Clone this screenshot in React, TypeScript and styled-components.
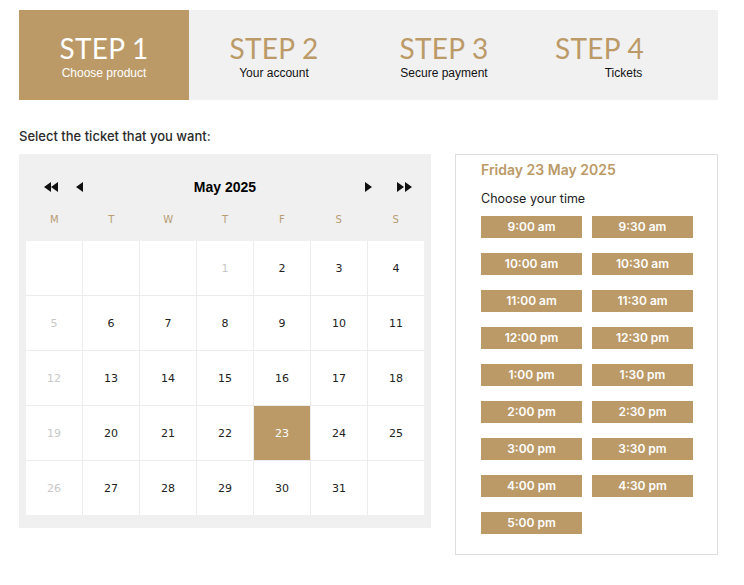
import React from 'react'
import styled, { createGlobalStyle } from 'styled-components'

const gold = '#bb9a67'

const GlobalStyle = createGlobalStyle`
  body {
    margin: 0;
    background: #fff;
    font-family: "Liberation Sans", Arial, sans-serif;
  }
`

const steps = [
    { title: 'STEP 1', label: 'Choose product', shift: 0 },
    { title: 'STEP 2', label: 'Your account', shift: 0 },
    { title: 'STEP 3', label: 'Secure payment', shift: 0 },
    { title: 'STEP 4', label: 'Tickets', shift: 48 },
]

const weekDays = ['M', 'T', 'W', 'T', 'F', 'S', 'S']

const times = [
    '9:00 am', '9:30 am', '10:00 am', '10:30 am', '11:00 am', '11:30 am',
    '12:00 pm', '12:30 pm', '1:00 pm', '1:30 pm', '2:00 pm', '2:30 pm',
    '3:00 pm', '3:30 pm', '4:00 pm', '4:30 pm', '5:00 pm',
]

// May 2025 starts on a Thursday
const days: (number | null)[] = [null, null, null, ...Array.from({ length: 31 }, (_, i) => i + 1), null]

export default function App() {
    return (
        <Page>
            <GlobalStyle />
            <Steps>
                {steps.map((s, i) => (
                    <Step key={s.title} $active={i === 0} $wide={i === 3}>
                        <StepTitle $active={i === 0} $shift={s.shift}>{s.title}</StepTitle>
                        <StepLabel $active={i === 0}>{s.label}</StepLabel>
                    </Step>
                ))}
            </Steps>

            <Intro>Select the ticket that you want:</Intro>

            <Content>
                <Calendar>
                    <NavRow>
                        <NavGroup>
                            <Arrow $dir="left" />
                            <Arrow $dir="left" />
                            <Spacer $size={18} />
                            <Arrow $dir="left" />
                        </NavGroup>
                        <Month>May 2025</Month>
                        <NavGroup $end>
                            <Arrow $dir="right" />
                            <Spacer $size={24} />
                            <Arrow $dir="right" />
                            <Arrow $dir="right" />
                        </NavGroup>
                    </NavRow>
                    <WeekRow>
                        {weekDays.map((d, i) => <WeekDay key={i}>{d}</WeekDay>)}
                    </WeekRow>
                    <DayGrid>
                        {days.map((d, i) => (
                            <Day key={i} $past={(d !== null && i % 7 === 0) || d === 1} $selected={d === 23}>
                                {d ?? ''}
                            </Day>
                        ))}
                    </DayGrid>
                </Calendar>

                <TimePanel>
                    <DateTitle>Friday 23 May 2025</DateTitle>
                    <ChooseLabel>Choose your time</ChooseLabel>
                    <TimeGrid>
                        {times.map(t => <TimeButton key={t}>{t}</TimeButton>)}
                    </TimeGrid>
                </TimePanel>
            </Content>
        </Page>
    )
}

const Page = styled.div`
    width: 699px;
    padding: 10px 0 0 19px;
`

const Steps = styled.div`
    display: flex;
    height: 90px;
    background-color: #f1f1f1;
`

const Step = styled.div<{ $active?: boolean; $wide?: boolean }>`
    width: ${props => props.$wide ? '189px' : '170px'};
    display: flex;
    flex-direction: column;
    align-items: center;
    padding-top: 22px;
    box-sizing: border-box;
    background-color: ${props => props.$active ? gold : 'transparent'};
`

const StepTitle = styled.div<{ $active?: boolean; $shift: number }>`
    font-family: Lato, "Open Sans", sans-serif;
    font-size: 28px;
    line-height: 32px;
    letter-spacing: 0.3px;
    padding-right: ${props => props.$shift}px;
    color: ${props => props.$active ? '#fff' : gold};
`

const StepLabel = styled.div<{ $active?: boolean }>`
    font-size: 12px;
    margin-top: 2px;
    color: ${props => props.$active ? '#fff' : '#111'};
`

const Intro = styled.div`
    font-family: Inter, "Noto Sans", sans-serif;
    font-size: 13px;
    font-weight: 500;
    color: #2b2b2b;
    margin: 28px 0 10px;
    line-height: 16px;
`

const Content = styled.div`
    display: flex;
    align-items: flex-start;
    gap: 24px;
`

const Calendar = styled.div`
    width: 412px;
    box-sizing: border-box;
    background-color: #f0f0f0;
    padding: 0 7px 13px;
`

const NavRow = styled.div`
    height: 56px;
    display: grid;
    grid-template-columns: 1fr auto 1fr;
    align-items: center;
    padding: 10px 12px 0 18px;
    box-sizing: border-box;
`

const NavGroup = styled.div<{ $end?: boolean }>`
    display: flex;
    align-items: center;
    justify-content: ${props => props.$end ? 'flex-end' : 'flex-start'};
`

const Spacer = styled.div<{ $size: number }>`
    width: ${props => props.$size}px;
`

const Arrow = styled.span<{ $dir: 'left' | 'right' }>`
    width: 0;
    height: 0;
    border-top: 5.5px solid transparent;
    border-bottom: 5.5px solid transparent;
    ${props => props.$dir === 'left'
        ? 'border-right: 7px solid #111;'
        : 'border-left: 7px solid #111; margin-left: 1px;'}
`

const Month = styled.div`
    font-size: 14px;
    font-weight: bold;
    color: #000;
    margin-right: 6px;
`

const WeekRow = styled.div`
    display: grid;
    grid-template-columns: repeat(7, 1fr);
    height: 31px;
`

const WeekDay = styled.div`
    font-family: "DejaVu Sans", Verdana, sans-serif;
    font-size: 10px;
    color: #b89c72;
    text-align: center;
    line-height: 20px;
`

const DayGrid = styled.div`
    display: grid;
    grid-template-columns: repeat(7, 56px);
    grid-auto-rows: 54px;
    gap: 1px;
    background-color: #ececec;
`

const Day = styled.div<{ $past?: boolean; $selected?: boolean }>`
    display: flex;
    align-items: center;
    justify-content: center;
    font-family: "DejaVu Sans", Verdana, sans-serif;
    font-size: 11px;
    background-color: ${props => props.$selected ? gold : '#fff'};
    color: ${props => props.$selected ? '#fff' : props.$past ? '#c8c8c8' : '#222'};
`

const TimePanel = styled.div`
    width: 263px;
    box-sizing: border-box;
    border: 1px solid #dedede;
    padding: 6px 20px 20px 25px;
`

const DateTitle = styled.div`
    font-family: Inter, "Noto Sans", sans-serif;
    font-size: 14px;
    font-weight: 600;
    color: ${gold};
    line-height: 18px;
`

const ChooseLabel = styled.div`
    font-family: Inter, "Noto Sans", sans-serif;
    font-size: 12.5px;
    color: #222;
    margin: 12px 0 9px;
    line-height: 16px;
`

const TimeGrid = styled.div`
    display: grid;
    grid-template-columns: repeat(2, 101px);
    column-gap: 10px;
    row-gap: 15px;
`

const TimeButton = styled.div`
    height: 22px;
    line-height: 22px;
    text-align: center;
    background-color: ${gold};
    color: #fff;
    font-family: Inter, "Noto Sans", sans-serif;
    font-size: 12px;
    font-weight: 600;
`
